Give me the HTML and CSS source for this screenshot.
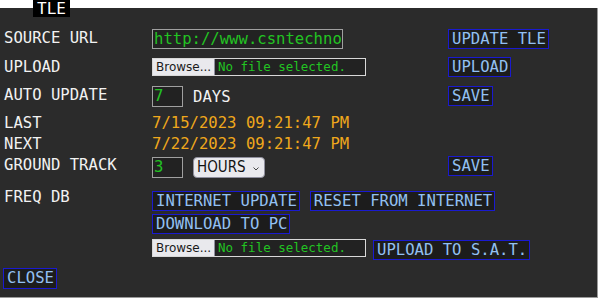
FILE: index.html
```html
<!DOCTYPE html>
<html lang="en">
  <head>
    <meta charset="UTF-8" />
    <meta name="viewport" content="width=device-width, initial-scale=1.0" />
    <title>TLE</title>
    <link rel="stylesheet" href="styles.css">
  </head>
  <body>
    <div class="panel">
      <div class="tab">TLE</div>

      <div class="form">
        <div class="label">SOURCE URL</div>
        <div class="cell"><div class="field url">http://www.csntechno</div></div>
        <div class="cell"><span class="btn">UPDATE TLE</span></div>

        <div class="label">UPLOAD</div>
        <div class="cell">
          <div class="file"><span class="browse">Browse...</span><span class="none">No file selected.</span></div>
        </div>
        <div class="cell up1"><span class="btn">UPLOAD</span></div>

        <div class="label">AUTO UPDATE</div>
        <div class="cell inline">
          <div class="field num">7</div>
          <span class="unit">DAYS</span>
        </div>
        <div class="cell"><span class="btn">SAVE</span></div>

        <div class="label">LAST</div>
        <div class="cell date">7/15/2023 09:21:47 PM</div>
        <div class="cell"></div>

        <div class="label">NEXT</div>
        <div class="cell date">7/22/2023 09:21:47 PM</div>
        <div class="cell"></div>

        <div class="label">GROUND TRACK</div>
        <div class="cell inline down1">
          <div class="field num">3</div>
          <div class="select">
            <span>HOURS</span>
            <svg class="chev" width="6" height="4" viewBox="0 0 6 4"><path d="M0.5 0.5 L3 3 L5.5 0.5" fill="none" stroke="#444" stroke-width="1"/></svg>
          </div>
        </div>
        <div class="cell"><span class="btn">SAVE</span></div>

        <div class="label">FREQ DB</div>
        <div class="cell wide">
          <div class="btn-row">
            <span class="btn">INTERNET UPDATE</span>
            <span class="btn">RESET FROM INTERNET</span>
          </div>
          <div class="btn-row">
            <span class="btn">DOWNLOAD TO PC</span>
          </div>
          <div class="btn-row file-row">
            <div class="file"><span class="browse">Browse...</span><span class="none">No file selected.</span></div>
            <span class="btn sat">UPLOAD TO S.A.T.</span>
          </div>
        </div>
      </div>

      <div class="footer">
        <span class="btn close">CLOSE</span>
      </div>
    </div>
  </body>
</html>
```

FILE: styles.css
```css
body {
  margin: 0;
  padding: 0;
  background: #fff;
  font-family: "DejaVu Sans Mono", monospace;
  font-size: 15.6px;
  color: #f2f2f2;
}

.panel {
  position: relative;
  margin-top: 8px;
  width: 598px;
  height: 290px;
  background: #2b2b2b;
  border-right: 1px solid #9a9a9a;
  border-bottom: 1px solid #9a9a9a;
  padding: 21px 0 0 4px;
  box-sizing: border-box;
}

.tab {
  position: absolute;
  top: -8px;
  left: 33px;
  width: 37px;
  height: 17px;
  background: #000;
  color: #fff;
  font-size: 16px;
  line-height: 18px;
  text-align: center;
  overflow: hidden;
}

.form {
  display: grid;
  grid-template-columns: 148px 296px auto;
  grid-template-rows: 29px 28px 28px 21px 21px 32px auto;
  align-items: start;
}

.label {
  line-height: 18px;
  white-space: nowrap;
}

.cell {
  line-height: 18px;
}

.inline {
  display: flex;
  align-items: center;
  gap: 10px;
}

.up1 {
  margin-top: -1px;
}

.down1 {
  margin-top: 1px;
}

.field {
  border: 1px solid #a0a0a0;
  background: #222;
  color: #22c422;
  padding: 0 1px;
  line-height: 18px;
  white-space: nowrap;
  overflow: hidden;
}

.url {
  width: 187px;
}

.num {
  width: 27px;
  line-height: 19px;
}

.unit {
  color: #f2f2f2;
}

.date {
  color: #f0a81c;
}

.file {
  display: flex;
  width: 212px;
  height: 16px;
  border: 1px solid #d8d8d8;
  background: #222;
}

.browse {
  background: #e9e9ed;
  color: #1a1a1a;
  font-family: "DejaVu Sans", sans-serif;
  font-size: 12px;
  line-height: 16px;
  padding: 0 3px;
  width: 55px;
  text-align: center;
  border-right: 1px solid #8f8f9d;
}

.none {
  color: #22c422;
  font-size: 12.5px;
  line-height: 16px;
  padding-left: 3px;
}

.select {
  display: flex;
  align-items: center;
  justify-content: space-between;
  width: 70px;
  height: 19px;
  background: #e9e9ed;
  border: 1px solid #8f8f9d;
  border-radius: 4px;
  color: #111;
  font-family: "DejaVu Sans", sans-serif;
  font-stretch: condensed;
  font-size: 15px;
  line-height: 19px;
  padding: 0 5px 0 3px;
  box-sizing: content-box;
  width: 62px;
}

.chev {
  margin-top: 2px;
}

.btn {
  display: inline-block;
  border: 1px solid #1a1ad0;
  background: #1c1c1c;
  color: #93c0f2;
  padding: 0 2px 0 3px;
  line-height: 18px;
  white-space: nowrap;
}

.wide {
  grid-column: 2 / 4;
  margin-top: 3px;
}

.btn-row {
  display: flex;
  gap: 10px;
  margin-bottom: 3px;
}

.file-row {
  margin-top: 5px;
  gap: 7px;
  align-items: flex-start;
}

.sat {
  margin-top: 1px;
}

.footer {
  margin-top: 5px;
}

.close {
  margin-left: -1px;
  line-height: 19px;
}
```
